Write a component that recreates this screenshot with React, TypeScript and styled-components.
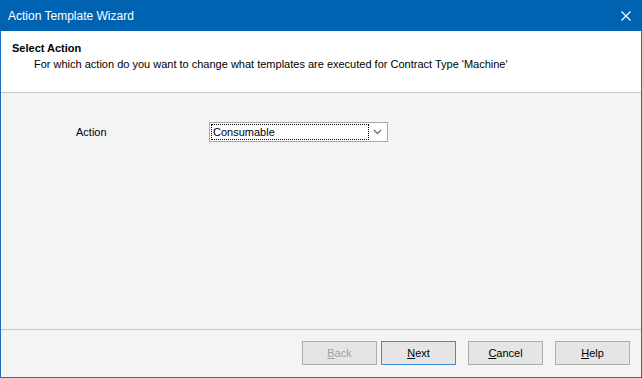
import styled, { createGlobalStyle } from "styled-components";

const GlobalStyle = createGlobalStyle`
  *, *::before, *::after {
    box-sizing: border-box;
  }
  html, body {
    margin: 0;
    padding: 0;
    background: #ffffff;
  }
  body {
    font-family: "Segoe UI", "Liberation Sans", Arial, sans-serif;
    font-size: 11px;
    color: #000;
  }
`;

const Window = styled.div`
  width: 642px;
  height: 378px;
  border: 1px solid #1a6fc0;
  border-top: none;
  display: flex;
  flex-direction: column;
  background: #f4f4f4;
`;

const TitleBar = styled.div`
  height: 31px;
  flex-shrink: 0;
  margin: 0 -1px;
  background: #0063b1;
  color: #fff;
  display: flex;
  align-items: center;
  justify-content: space-between;
  padding-left: 8px;
  font-size: 12px;
`;

const CloseButton = styled.div`
  width: 32px;
  height: 31px;
  display: flex;
  align-items: center;
  justify-content: center;
`;

const Header = styled.div`
  height: 62px;
  flex-shrink: 0;
  background: #fff;
  border-bottom: 1px solid #c6c6c6;
  padding: 10px 0 0 11px;
`;

const HeaderTitle = styled.div`
  font-weight: bold;
  line-height: 15px;
`;

const HeaderText = styled.div`
  padding-left: 22px;
  line-height: 16px;
`;

const Body = styled.div`
  flex: 1;
  padding: 29px 0 0 75px;
`;

const FieldRow = styled.div`
  display: flex;
  align-items: center;
  height: 20px;
`;

const Label = styled.div`
  width: 133px;
`;

const Combo = styled.div`
  width: 179px;
  height: 20px;
  border: 1px solid #a9a9a9;
  background: #fff;
  display: flex;
  align-items: center;
  padding: 1px;
`;

const ComboValue = styled.div`
  flex: 1;
  height: 16px;
  border: 1px dotted #000;
  line-height: 14px;
  padding-left: 1px;
`;

const ComboArrow = styled.div`
  width: 17px;
  display: flex;
  align-items: center;
  justify-content: center;
`;

const Footer = styled.div`
  height: 48px;
  flex-shrink: 0;
  border-top: 1px solid #c6c6c6;
  display: flex;
  justify-content: flex-end;
  align-items: flex-start;
  gap: 12px;
  padding: 11px 11px 0 0;
`;

const NavGroup = styled.div`
  display: flex;
  gap: 4px;
`;

const Button = styled.div<{ $disabled?: boolean; $default?: boolean }>`
  width: 75px;
  height: 24px;
  border: 1px solid ${(p) => (p.$default ? "#3c8de0" : "#adadad")};
  background: #e5e5e5;
  display: flex;
  align-items: center;
  justify-content: center;
  color: ${(p) => (p.$disabled ? "#a0a0a0" : "#000")};
  u {
    text-decoration: underline;
  }
`;

export default function App() {
  return (
    <>
      <GlobalStyle />
      <Window>
        <TitleBar>
          <span>Action Template Wizard</span>
          <CloseButton>
            <svg width="10" height="10" viewBox="0 0 10 10">
              <path d="M0.5 0.5 L9.5 9.5 M9.5 0.5 L0.5 9.5" stroke="#fff" strokeWidth="1.2" />
            </svg>
          </CloseButton>
        </TitleBar>
        <Header>
          <HeaderTitle>Select Action</HeaderTitle>
          <HeaderText>
            For which action do you want to change what templates are executed for Contract Type 'Machine'
          </HeaderText>
        </Header>
        <Body>
          <FieldRow>
            <Label>Action</Label>
            <Combo>
              <ComboValue>Consumable</ComboValue>
              <ComboArrow>
                <svg width="9" height="6" viewBox="0 0 9 6">
                  <path d="M1 1 L4.5 4.5 L8 1" stroke="#707070" strokeWidth="1.4" fill="none" />
                </svg>
              </ComboArrow>
            </Combo>
          </FieldRow>
        </Body>
        <Footer>
          <NavGroup>
            <Button $disabled>
              <span><u>B</u>ack</span>
            </Button>
            <Button $default>
              <span><u>N</u>ext</span>
            </Button>
          </NavGroup>
          <Button>
            <span><u>C</u>ancel</span>
          </Button>
          <Button>
            <span><u>H</u>elp</span>
          </Button>
        </Footer>
      </Window>
    </>
  );
}
